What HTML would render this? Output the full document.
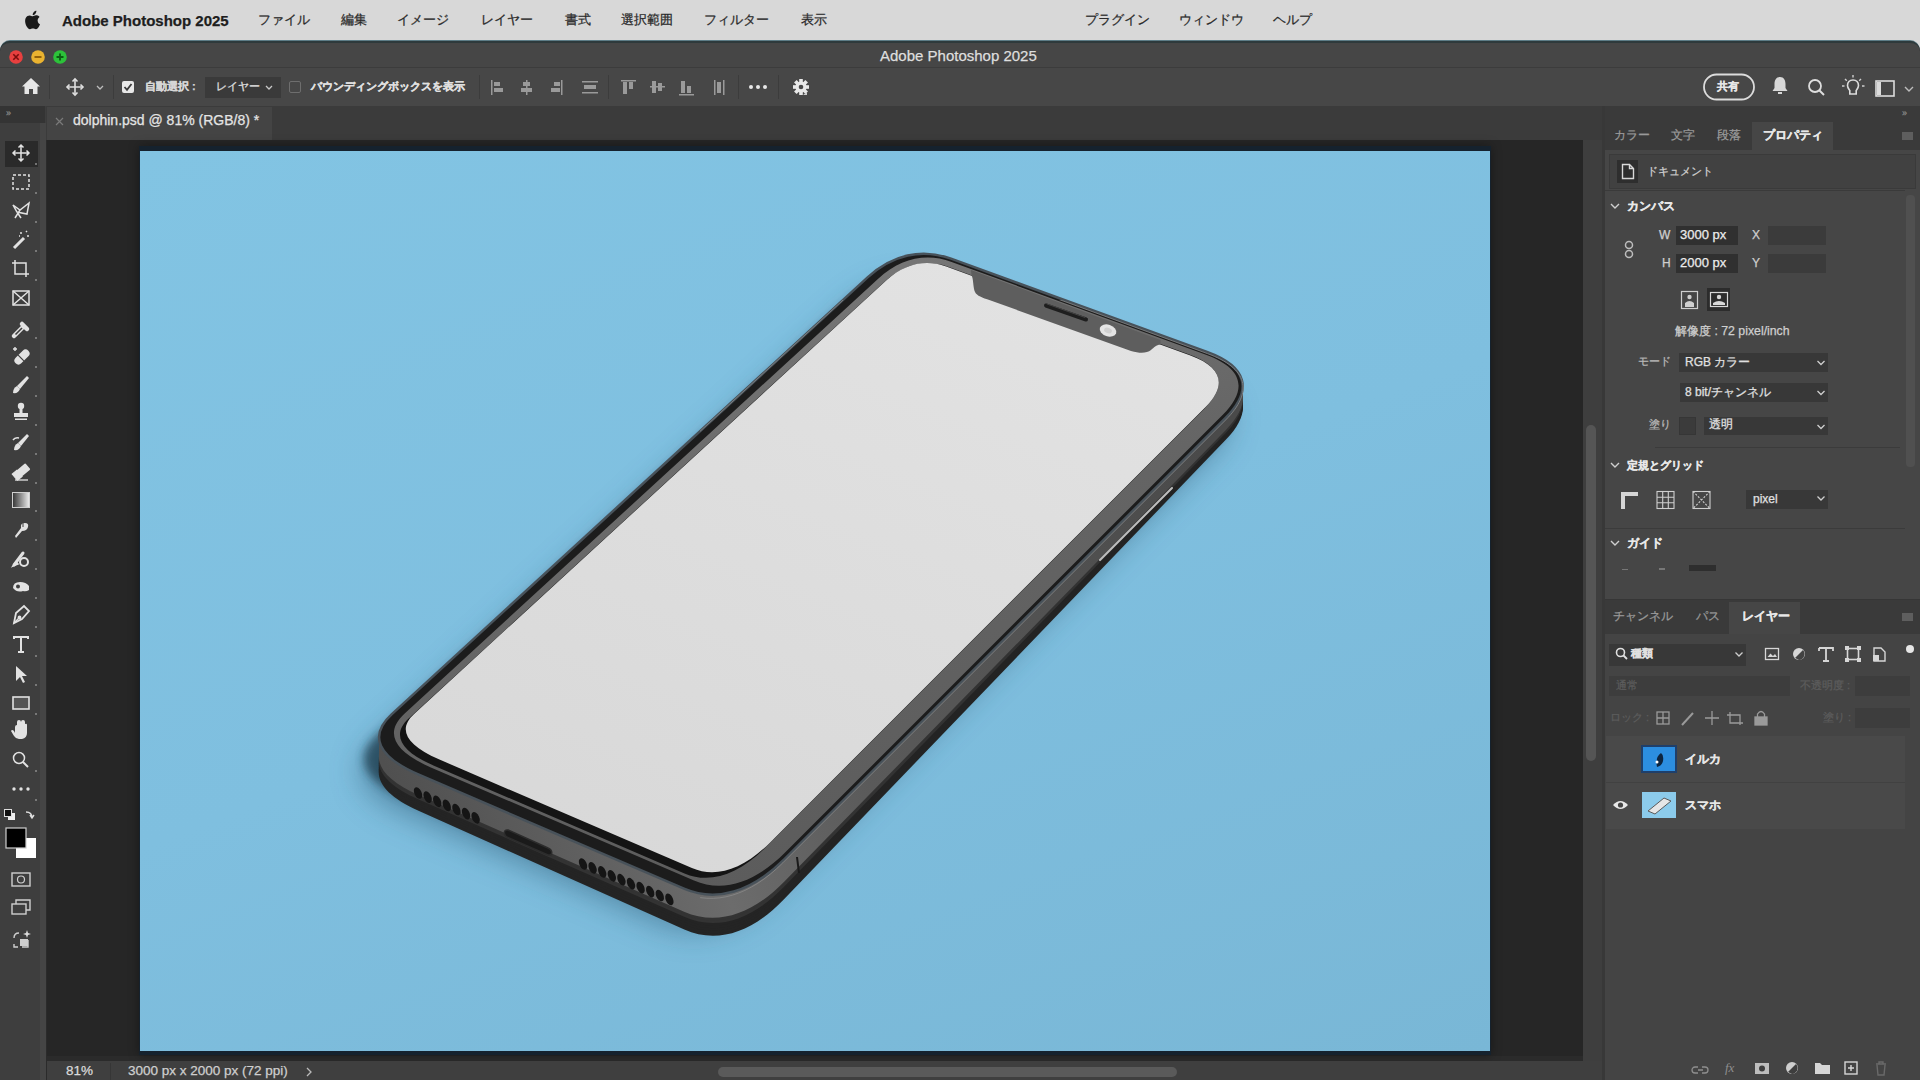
<!DOCTYPE html>
<html lang="ja">
<head>
<meta charset="utf-8">
<style>
*{margin:0;padding:0;box-sizing:border-box}
html,body{width:1920px;height:1080px;overflow:hidden;background:#d9d9d9;font-family:"Liberation Sans",sans-serif}
.a{position:absolute}
.t{position:absolute;white-space:nowrap;line-height:1;-webkit-text-stroke:0.25px currentColor}
#menubar{left:0;top:0;width:1920px;height:41px;background:#d8d8d8}
#menubar .t{top:13px;font-size:13px;color:#2a2a2a}
#win{left:0;top:41px;width:1920px;height:1039px;background:#2b2b2b;border-radius:10px 10px 0 0;box-shadow:0 -1px 0 #5d7c86}
#title{left:0;top:41px;width:1920px;height:27px;background:#464646;border-radius:10px 10px 0 0;border-top:2px solid #2e3a3c;border-bottom:1px solid #3c3c3c}
#opts{left:0;top:68px;width:1920px;height:38px;background:#474747}
#tabs{left:0;top:106px;width:1920px;height:34px;background:#3b3b3b}
#tool{left:0;top:106px;width:46px;height:974px;background:#3e3e3e}
#paste{left:47px;top:140px;width:1536px;height:921px;background:#262626;border-bottom:5px solid #2b2b2b}
#status{left:47px;top:1061px;width:1555px;height:19px;background:#3f3f3f}
#vscroll{left:1583px;top:140px;width:19px;height:921px;background:#3e3e3e}
#rpanel{left:1602px;top:106px;width:318px;height:974px;background:#3a3a3a}
.ic{position:absolute}
</style>
</head>
<body>
<div id="menubar" class="a">
  <svg class="a" style="left:24px;top:10px" width="17" height="20" viewBox="0 0 17 20"><path d="M13.6 10.6c0-2.3 1.9-3.4 2-3.5-1.1-1.6-2.8-1.8-3.4-1.8-1.4-.1-2.8.9-3.5.9-.7 0-1.8-.8-3-.8C4.200 5.400 2.700 6.300 1.900 7.700c-1.600 2.800-.4 6.900 1.100 9.200.8 1.100 1.700 2.300 2.900 2.300 1.200 0 1.600-.7 3-.7s1.800.7 3 .7c1.300 0 2.100-1.100 2.800-2.300.9-1.300 1.300-2.600 1.300-2.600-.1 0-2.400-.9-2.400-3.700zM11.400 3.800c.6-.8 1.100-1.900 1-3-.9 0-2.100.6-2.700 1.400-.6.700-1.100 1.800-1 2.900 1 .1 2.100-.5 2.700-1.300z" fill="#1a1a1a"/></svg>
  <div class="t" style="left:62px;font-weight:bold;font-size:15px;color:#1e1e1e">Adobe Photoshop 2025</div>
  <div class="t" style="left:258px">ファイル</div>
  <div class="t" style="left:341px">編集</div>
  <div class="t" style="left:397px">イメージ</div>
  <div class="t" style="left:481px">レイヤー</div>
  <div class="t" style="left:565px">書式</div>
  <div class="t" style="left:621px">選択範囲</div>
  <div class="t" style="left:704px">フィルター</div>
  <div class="t" style="left:801px">表示</div>
  <div class="t" style="left:1085px">プラグイン</div>
  <div class="t" style="left:1179px">ウィンドウ</div>
  <div class="t" style="left:1273px">ヘルプ</div>
</div>
<div id="win" class="a"></div>
  <div id="title" class="a">
    <svg class="a" style="left:0;top:0" width="80" height="27">
      <circle cx="16" cy="14" r="6.8" fill="#e8403f"/><path d="M13.3 11.3 L18.7 16.7 M18.7 11.3 L13.3 16.7" stroke="#7a0d0d" stroke-width="1.6"/>
      <circle cx="38" cy="14" r="6.8" fill="#eab330"/><path d="M34.5 14 H41.5" stroke="#8a5a05" stroke-width="1.8"/>
      <circle cx="60" cy="14" r="6.8" fill="#2cc23a"/><path d="M56.5 14 H63.5 M60 10.5 V17.5" stroke="#0b5e12" stroke-width="1.8"/>
    </svg>
    <div class="t" style="left:880px;top:5px;font-size:15px;color:#dedede">Adobe Photoshop 2025</div>
  </div>
  <div id="opts" class="a">
    <svg class="a" style="left:0;top:0" width="1920" height="38" viewBox="0 0 1920 38">
      <g fill="#e6e6e6" stroke="none">
        <path d="M31 10 L22 18.5 L24.5 18.5 L24.5 26 L29 26 L29 21 L33 21 L33 26 L37.5 26 L37.5 18.5 L40 18.5 Z"/>
      </g>
      <g stroke="#e0e0e0" stroke-width="1.6" fill="none">
        <path d="M75 11 V27 M67 19 H83"/>
        <path d="M72.5 13.5 L75 11 L77.5 13.5 M72.5 24.5 L75 27 L77.5 24.5 M69.5 16.5 L67 19 L69.5 21.5 M80.5 16.5 L83 19 L80.5 21.5"/>
        <path d="M97 18 L100 21 L103 18" stroke-width="1.3" stroke="#bdbdbd"/>
      </g>
      <rect x="49" y="7" width="1" height="24" fill="#3c3c3c"/>
      <rect x="113" y="7" width="1" height="24" fill="#3c3c3c"/>
      <rect x="122" y="13" width="12" height="12" rx="2" fill="#e8e8e8"/>
      <path d="M124.5 19 L127 21.8 L131.5 16" stroke="#3a3a3a" stroke-width="1.8" fill="none"/>
      <rect x="205" y="9" width="76" height="21" fill="#3a3a3a"/>
      <path d="M266 18 L269 21 L272 18" stroke="#c8c8c8" stroke-width="1.3" fill="none"/>
      <rect x="289.5" y="13.5" width="11" height="11" rx="1.5" fill="none" stroke="#6e6e6e" stroke-width="1"/>
      <rect x="479" y="7" width="1" height="24" fill="#3c3c3c"/>
      <g fill="#9a9a9a">
        <rect x="491" y="12" width="1.5" height="15"/><rect x="494" y="14" width="6" height="4"/><rect x="494" y="20" width="9" height="4"/>
        <rect x="526" y="12" width="1.5" height="15"/><rect x="523" y="14" width="7" height="4"/><rect x="521" y="20" width="11" height="4"/>
        <rect x="561" y="12" width="1.5" height="15"/><rect x="554" y="14" width="6" height="4"/><rect x="551" y="20" width="9" height="4"/>
        <rect x="582" y="13" width="16" height="1.5"/><rect x="584" y="17" width="12" height="4"/><rect x="582" y="24" width="16" height="1.5"/>
      </g>
      <rect x="608" y="7" width="1" height="24" fill="#3c3c3c"/>
      <g fill="#9a9a9a">
        <rect x="621" y="12" width="15" height="1.5"/><rect x="623" y="14" width="4" height="12"/><rect x="629" y="14" width="4" height="7"/>
        <rect x="650" y="18" width="15" height="1.5"/><rect x="652" y="13" width="4" height="12"/><rect x="658" y="15" width="4" height="8"/>
        <rect x="679" y="26" width="15" height="1.5"/><rect x="681" y="13" width="4" height="12"/><rect x="687" y="18" width="4" height="7"/>
        <rect x="714" y="12" width="1.5" height="15"/><rect x="717" y="14" width="4" height="11"/><rect x="723" y="12" width="1.5" height="15"/>
      </g>
      <rect x="738" y="7" width="1" height="24" fill="#3c3c3c"/>
      <g fill="#e8e8e8"><circle cx="751" cy="19" r="2"/><circle cx="758" cy="19" r="2"/><circle cx="765" cy="19" r="2"/></g>
      <rect x="778" y="7" width="1" height="24" fill="#3c3c3c"/>
      <g transform="translate(801 19)" fill="#e8e8e8">
        <circle r="5.5"/>
        <g><rect x="-1.8" y="-8" width="3.6" height="16"/><rect x="-8" y="-1.8" width="16" height="3.6"/><rect x="-1.8" y="-8" width="3.6" height="16" transform="rotate(45)"/><rect x="-1.8" y="-8" width="3.6" height="16" transform="rotate(-45)"/></g>
        <circle r="2.3" fill="#474747"/>
      </g>
      <path d="M803 27 h4 v-3 z" fill="#cfcfcf"/>
      <rect x="1704" y="6.5" width="50" height="25" rx="12.5" fill="none" stroke="#dcdcdc" stroke-width="1.8"/>
      <path d="M1780 9 c-4 0 -5.5 3.5 -5.5 7 v4 l-2 3 h15 l-2 -3 v-4 c0 -3.5 -1.5 -7 -5.5 -7z M1778 24 h4 v2 h-4z" fill="#d8d8d8"/>
      <circle cx="1815" cy="18" r="6" fill="none" stroke="#dedede" stroke-width="1.8"/>
      <path d="M1819.5 22.5 L1824 27" stroke="#dedede" stroke-width="2"/>
      <path d="M1853 12 c-3.5 0 -5.5 2.6 -5.5 5.5 c0 2.2 1.5 3.6 2.3 5 v3.5 h6.4 v-3.5 c0.8 -1.4 2.3 -2.8 2.3 -5 c0 -2.9 -2 -5.5 -5.5 -5.5z" fill="none" stroke="#dcdcdc" stroke-width="1.6"/>
      <path d="M1853 7 v2.5 M1845 11 l1.8 1.8 M1861 11 l-1.8 1.8 M1842 18 h2.5 M1862 18 h2.5" stroke="#cfcfcf" stroke-width="1.4"/>
      <rect x="1876" y="13" width="18" height="15" fill="none" stroke="#dcdcdc" stroke-width="1.6"/>
      <rect x="1877" y="14" width="4" height="13" fill="#dcdcdc"/>
      <path d="M1905 19 L1909 23 L1913 19" stroke="#bdbdbd" stroke-width="1.4" fill="none"/>
    </svg>
    <div class="t" style="left:145px;top:13px;font-size:11px;color:#d6d6d6;font-weight:bold">自動選択 :</div>
    <div class="t" style="left:216px;top:13px;font-size:11px;color:#e0e0e0">レイヤー</div>
    <div class="t" style="left:311px;top:13px;font-size:11px;color:#e0e0e0;font-weight:bold">バウンディングボックスを表示</div>
    <div class="t" style="left:1717px;top:13px;font-size:11px;color:#e6e6e6;font-weight:bold">共有</div>
  </div>
  <div id="tabs" class="a">
    <div class="a" style="left:47px;top:1px;width:225px;height:33px;background:#444444"></div>
    <div class="t" style="left:73px;top:7px;font-size:14px;color:#e4e4e4">dolphin.psd @ 81% (RGB/8) *</div>
    <svg class="a" style="left:55px;top:11px" width="9" height="9"><path d="M1 1 L8 8 M8 1 L1 8" stroke="#7a7a7a" stroke-width="1.2"/></svg>
  </div>
  <div id="tool" class="a">
    <div class="a" style="left:0;top:0;width:45px;height:17px;background:#343434"></div>
    <div class="t" style="left:6px;top:3px;font-size:9px;color:#8a8a8a;letter-spacing:-1px">&#8250;&#8250;</div>
    <div class="a" style="left:40px;top:17px;width:6px;height:957px;background:#454545"></div>
    <div class="a" style="left:5px;top:35px;width:33px;height:26px;background:#2a2a2a"></div>
  </div>
  <svg class="a" style="left:0;top:140px" width="46" height="820" viewBox="0 140 46 820">
    <g fill="none" stroke="#e2e2e2" stroke-width="1.5">
      <!-- move 153 -->
      <path d="M21 145 V161 M13 153 H29 M18.5 147.5 L21 145 L23.5 147.5 M18.5 158.5 L21 161 L23.5 158.5 M15.5 150.5 L13 153 L15.5 155.5 M26.5 150.5 L29 153 L26.5 155.5"/>
      <!-- marquee 182 -->
      <rect x="13" y="175" width="16" height="14" stroke-dasharray="3 2"/>
      <!-- lasso 211 -->
      <path d="M13 205 L20 210 L29 203 L27 214 L17 212 Z M20 210 L15 218 M17 212 L21 218"/>
      <!-- wand 240 -->
      <path d="M14 248 L24 238" stroke-width="3"/>
      <path d="M21 232 v2 M27 236 h2 M26 231 l1 1 M19 236 h1"/>
      <!-- crop 269 -->
      <path d="M15 260 V274 H29 M12 263 H26 V277"/>
      <!-- frame 298 -->
      <rect x="13" y="291" width="16" height="14"/><path d="M13 291 L29 305 M29 291 L13 305"/>
      <!-- eyedropper 327 -->
      <path d="M14 336 L23 327" stroke-width="4.5" stroke-linecap="round"/><path d="M15.5 334.5 L22 328" stroke="#3e3e3e" stroke-width="1.6"/><path d="M22 324 L27 329" stroke-width="4.5" stroke-linecap="round"/>
      <!-- healing 356 -->
      <g transform="rotate(-45 22 357)"><rect x="13" y="353" width="18" height="8" rx="4" fill="#e2e2e2" stroke="none"/><rect x="20" y="353" width="1.2" height="8" fill="#3e3e3e" stroke="none"/></g><path d="M13 349 h4 M15 347 v4" stroke-width="1.4"/>
      <!-- brush 385 -->
      <path d="M27 376 L29 378 L20 389 L17 386 Z" fill="#e2e2e2" stroke="none"/><path d="M17 386 L20 389 Q18 394 13 393 Q13 388 17 386Z" fill="#e2e2e2" stroke="none"/>
      <!-- stamp 414 -->
      <path d="M21 407 V413" stroke-width="3"/><circle cx="21" cy="406" r="3.2" fill="#e2e2e2" stroke="none"/><rect x="14" y="413" width="14" height="4" fill="#e2e2e2" stroke="none"/><rect x="15" y="418.5" width="12" height="1.5" fill="#e2e2e2" stroke="none"/>
      <!-- history brush 443 -->
      <path d="M27 434 L29 436 L21 446 L18 443 Z" fill="#e2e2e2" stroke="none"/><path d="M18 443 L21 446 Q19 451 14 450 Q14 445 18 443Z" fill="#e2e2e2" stroke="none"/><path d="M13 440 q2 -3 6 -2" stroke-width="1.5"/>
      <!-- eraser 472 -->
      <g transform="rotate(-40 21 472)"><rect x="13" y="468" width="17" height="8" rx="1" fill="#e2e2e2" stroke="none"/><rect x="13" y="468" width="6" height="8" fill="none" stroke="#e2e2e2" stroke-width="1.2"/></g><path d="M15 480 H28" stroke-width="1.3"/>
      <!-- gradient 500 -->
      <rect x="12.5" y="492.5" width="17" height="15" fill="url(#grad)" stroke="#cfcfcf" stroke-width="1"/>
      <!-- smudge 529 -->
      <path d="M15 536 L21 528 Q20 523 25 523 Q29 523 28 527 Q27 531 22 531 L16 538 Z" fill="#e2e2e2" stroke="none"/><path d="M20 524 v4 M23 523 v4" stroke="#3e3e3e" stroke-width="1"/>
      <!-- dodge/burn 558 -->
      <path d="M14 565 L23 553" stroke-width="3" stroke-linecap="round"/><path d="M13 566 l3 -4 l2 2z" fill="#e2e2e2"/><circle cx="24" cy="562" r="4" stroke-width="2"/>
      <!-- sponge 587 -->
      <path d="M13 588 q0 -6 7 -6 q6 0 9 4 l0 4 q-3 2 -6 1 q-6 2 -10 -3z" fill="#e2e2e2" stroke="none"/><circle cx="18" cy="586.5" r="2" fill="#3e3e3e" stroke="none"/>
      <!-- pen 616 -->
      <path d="M14 623 L16 613 L24 606 L29 611 L22 619 Z" stroke-width="1.8"/><path d="M14 623 L19 618" stroke-width="1.4"/><circle cx="19.5" cy="617.5" r="1.2" fill="#e2e2e2"/>
      <!-- type 645 -->
      <path d="M14 639 V637 H28 V639 M21 637 V652 M18 652 H24" stroke-width="2"/>
      <!-- path select 674 -->
      <path d="M16 666 V681 L20 677 L23 683 L25 682 L22 676 H27 Z" fill="#e2e2e2" stroke="none"/>
      <!-- rectangle 703 -->
      <rect x="13" y="697" width="16" height="12" fill="#555" stroke-width="1.6"/>
      <!-- hand 731 -->
      <path d="M15 733 V727 q0 -2 2 -2 v-3 q0 -2 2 -2 q2 0 2 2 q0 -2 2 -2 q2 0 2 2 v2 q2 -1 2 1 v8 q0 5 -5 6 h-3 q-3 0 -5 -3 l-3 -5 q1 -2 3 0z" fill="#e2e2e2" stroke="none"/>
      <!-- zoom 760 -->
      <circle cx="19" cy="758" r="5.5"/><path d="M23 762 L28 767" stroke-width="2"/>
    </g>
    <g fill="#e2e2e2"><circle cx="14" cy="789" r="1.7"/><circle cx="21" cy="789" r="1.7"/><circle cx="28" cy="789" r="1.7"/></g>
    <g fill="#8c8c8c"><circle cx="36" cy="164" r="1"/><circle cx="36" cy="193" r="1"/><circle cx="36" cy="222" r="1"/><circle cx="36" cy="251" r="1"/><circle cx="36" cy="280" r="1"/><circle cx="36" cy="338" r="1"/><circle cx="36" cy="367" r="1"/><circle cx="36" cy="396" r="1"/><circle cx="36" cy="425" r="1"/><circle cx="36" cy="454" r="1"/><circle cx="36" cy="483" r="1"/><circle cx="36" cy="511" r="1"/><circle cx="36" cy="540" r="1"/><circle cx="36" cy="569" r="1"/><circle cx="36" cy="598" r="1"/><circle cx="36" cy="627" r="1"/><circle cx="36" cy="656" r="1"/><circle cx="36" cy="685" r="1"/><circle cx="36" cy="714" r="1"/><circle cx="36" cy="771" r="1"/><circle cx="36" cy="800" r="1"/></g>
    <!-- swap / default -->
    <rect x="8" y="813" width="7" height="7" fill="#eee"/>
    <rect x="4.5" y="809.5" width="7" height="7" fill="#111" stroke="#ddd" stroke-width="1"/>
    <path d="M26 812 q6 0 6 6 M30 815 l2 3 l2 -3" stroke="#ddd" stroke-width="1.4" fill="none"/>
    <!-- fg/bg -->
    <rect x="16" y="838" width="20" height="20" fill="#fff"/>
    <rect x="6" y="828" width="20" height="20" fill="#000" stroke="#cfcfcf" stroke-width="1.2"/>
    <!-- quick mask 879 -->
    <rect x="12" y="873" width="18" height="13" fill="none" stroke="#cfcfcf" stroke-width="1.4"/>
    <circle cx="21" cy="879.5" r="3.5" fill="none" stroke="#cfcfcf" stroke-width="1.2"/>
    <!-- screen mode 908 -->
    <rect x="12" y="904" width="14" height="10" fill="none" stroke="#cfcfcf" stroke-width="1.4"/>
    <path d="M16 904 v-4 h14 v10 h-4" fill="none" stroke="#cfcfcf" stroke-width="1.4"/>
    <!-- 942 -->
    <path d="M14 938 q0 -5 5 -5 M14 944 v3 h4 M22 947 h6 v-7" fill="none" stroke="#cfcfcf" stroke-width="1.4"/>
    <rect x="20" y="939" width="8" height="7" fill="#cfcfcf"/>
    <path d="M26 933 l1 -3 l1 3 l3 1 l-3 1 l-1 3 l-1 -3 l-3 -1z" fill="#dcdcdc"/>
    <defs><linearGradient id="grad" x1="0" x2="1"><stop offset="0" stop-color="#333"/><stop offset="1" stop-color="#eee"/></linearGradient></defs>
  </svg>
  <div id="paste" class="a">
    <div class="a" style="left:92px;top:6px;width:1352px;height:909px;background:#15222e;box-shadow:0 0 10px rgba(0,0,0,0.35)"></div>
    <div class="a" style="left:93px;top:11px;width:1350px;height:900px;background:linear-gradient(160deg,#82c4e3 0%,#7fbfdf 50%,#79b7d6 100%)"></div>
  </div>
  <div id="vscroll" class="a">
    <div class="a" style="left:3px;top:285px;width:10px;height:336px;border-radius:5px;background:#555"></div>
  </div>
  <div id="status" class="a">
    <div class="t" style="left:19px;top:3px;font-size:13.5px;color:#dadada">81%</div>
    <div class="a" style="left:63px;top:2px;width:1px;height:18px;background:#363636"></div>
    <div class="t" style="left:81px;top:3px;font-size:13.5px;color:#cfcfcf">3000 px x 2000 px (72 ppi)</div>
    <svg class="a" style="left:258px;top:6px" width="8" height="10"><path d="M2 1 L6 5 L2 9" stroke="#bbb" stroke-width="1.3" fill="none"/></svg>
    <div class="a" style="left:671px;top:6px;width:459px;height:10px;border-radius:5px;background:#5a5a5a"></div>
  </div>
  <div id="rpanel" class="a">
    <div class="a" style="left:0;top:0;width:318px;height:16px;background:#3a3a3a"></div>
    <div class="t" style="left:300px;top:3px;font-size:9px;color:#8a8a8a;letter-spacing:-1px">&#8250;&#8250;</div>
    <div class="a" style="left:0;top:0;width:3px;height:974px;background:#383838"></div>
  </div>
  <div class="a" style="left:1605px;top:122px;width:315px;height:28px;background:#3a3a3a"></div>
  <div class="a" style="left:1752px;top:122px;width:81px;height:28px;background:#464646"></div>
  <div class="t" style="left:1614px;top:129px;font-size:12px;color:#9a9a9a">カラー</div>
  <div class="t" style="left:1671px;top:129px;font-size:12px;color:#9a9a9a">文字</div>
  <div class="t" style="left:1717px;top:129px;font-size:12px;color:#9a9a9a">段落</div>
  <div class="t" style="left:1763px;top:129px;font-size:12px;color:#e8e8e8;font-weight:bold">プロパティ</div>
  <div class="a" style="left:1902px;top:132px;width:11px;height:8px;background:#5e5e5e"></div>
  <!-- properties content -->
  <div class="a" style="left:1605px;top:150px;width:315px;height:449px;background:#464646"></div>
  <div class="a" style="left:1609px;top:154px;width:307px;height:35px;border:1px solid #3a3a3a;background:#414141"></div>
  <div class="a" style="left:1617px;top:160px;width:21px;height:23px;background:#2e2e2e"></div>
  <svg class="a" style="left:1621px;top:163px" width="14" height="17"><path d="M1.5 1.5 H8.5 L12.5 5.5 V15.5 H1.5 Z M8.5 1.5 V5.5 H12.5" fill="none" stroke="#d8d8d8" stroke-width="1.4"/></svg>
  <div class="t" style="left:1647px;top:166px;font-size:11px;color:#cfcfcf">ドキュメント</div>
  <div class="a" style="left:1605px;top:190px;width:300px;height:1px;background:#3a3a3a"></div>
  <svg class="a" style="left:1610px;top:202px" width="10" height="8"><path d="M1 2 L5 6 L9 2" stroke="#cfcfcf" stroke-width="1.4" fill="none"/></svg>
  <div class="t" style="left:1627px;top:201px;font-size:11.5px;color:#e8e8e8;font-weight:bold">カンバス</div>
  <div class="t" style="left:1659px;top:229px;font-size:12px;color:#cfcfcf">W</div>
  <div class="a" style="left:1676px;top:226px;width:62px;height:19px;background:#303030"></div>
  <div class="t" style="left:1680px;top:228px;font-size:13px;color:#ececec">3000 px</div>
  <div class="t" style="left:1752px;top:229px;font-size:12px;color:#cfcfcf">X</div>
  <div class="a" style="left:1768px;top:226px;width:58px;height:19px;background:#3b3b3b"></div>
  <div class="t" style="left:1662px;top:257px;font-size:12px;color:#cfcfcf">H</div>
  <div class="a" style="left:1676px;top:254px;width:62px;height:19px;background:#303030"></div>
  <div class="t" style="left:1680px;top:256px;font-size:13px;color:#ececec">2000 px</div>
  <div class="t" style="left:1752px;top:257px;font-size:12px;color:#cfcfcf">Y</div>
  <div class="a" style="left:1768px;top:254px;width:58px;height:19px;background:#3b3b3b"></div>
  <svg class="a" style="left:1623px;top:240px" width="12" height="20"><circle cx="6" cy="5" r="3.5" fill="none" stroke="#bdbdbd" stroke-width="1.5"/><circle cx="6" cy="14" r="3.5" fill="none" stroke="#bdbdbd" stroke-width="1.5"/></svg>
  <svg class="a" style="left:1679px;top:288px" width="52" height="24">
    <rect x="2.5" y="3.5" width="16" height="17" fill="none" stroke="#cfcfcf" stroke-width="1.2"/>
    <circle cx="10.5" cy="9" r="2.2" fill="#cfcfcf"/><path d="M6 19 v-4 q4.5 -4 9 0 v4z" fill="#cfcfcf"/>
    <rect x="28" y="0" width="23" height="23" fill="#2c2c2c"/>
    <rect x="31.5" y="4.5" width="17" height="14" fill="none" stroke="#d8d8d8" stroke-width="1.2"/>
    <circle cx="40" cy="9" r="2.2" fill="#d8d8d8"/><path d="M34 17 v-2 q6 -4 12 0 v2z" fill="#d8d8d8"/>
  </svg>
  <div class="t" style="left:1675px;top:325px;font-size:12.3px;color:#cfcfcf">解像度 : 72 pixel/inch</div>
  <div class="t" style="left:1638px;top:356px;font-size:11px;color:#b8b8b8">モード</div>
  <div class="a" style="left:1679px;top:353px;width:149px;height:19px;background:#383838"></div>
  <div class="t" style="left:1685px;top:356px;font-size:12px;color:#e0e0e0">RGB カラー</div>
  <div class="a" style="left:1680px;top:383px;width:148px;height:19px;background:#383838"></div>
  <div class="t" style="left:1685px;top:386px;font-size:12px;color:#e0e0e0">8 bit/チャンネル</div>
  <div class="t" style="left:1649px;top:419px;font-size:11px;color:#b8b8b8">塗り</div>
  <div class="a" style="left:1679px;top:417px;width:17px;height:18px;background:#3b3b3b;border:1px solid #363636"></div>
  <div class="a" style="left:1704px;top:417px;width:124px;height:18px;background:#383838"></div>
  <div class="t" style="left:1709px;top:419px;font-size:11.5px;color:#e0e0e0">透明</div>
  <svg class="a" style="left:1816px;top:358px" width="10" height="80"><path d="M1.5 3 L5 6.5 L8.5 3 M1.5 33 L5 36.5 L8.5 33 M1.5 67 L5 70.5 L8.5 67" stroke="#cfcfcf" stroke-width="1.3" fill="none"/></svg>
  <div class="a" style="left:1655px;top:447px;width:245px;height:1px;background:#3b3b3b"></div>
  <svg class="a" style="left:1610px;top:461px" width="10" height="8"><path d="M1 2 L5 6 L9 2" stroke="#cfcfcf" stroke-width="1.4" fill="none"/></svg>
  <div class="t" style="left:1627px;top:460px;font-size:11px;color:#e8e8e8;font-weight:bold">定規とグリッド</div>
  <svg class="a" style="left:1619px;top:489px" width="100" height="22">
    <path d="M2 20 V3 H19 V7 H6 V20 Z" fill="#d6d6d6"/>
    <g fill="none" stroke="#cfcfcf" stroke-width="1.1"><rect x="38" y="2.5" width="17" height="17"/><path d="M38 8.2 H55 M38 13.8 H55 M43.7 2.5 V19.5 M49.3 2.5 V19.5"/>
    <rect x="74" y="2.5" width="17" height="17"/><path d="M74 2.5 L91 19.5 M91 2.5 L74 19.5" stroke-dasharray="2 1.5"/></g>
  </svg>
  <div class="a" style="left:1746px;top:490px;width:82px;height:19px;background:#383838"></div>
  <div class="t" style="left:1753px;top:493px;font-size:12px;color:#e0e0e0">pixel</div>
  <svg class="a" style="left:1816px;top:495px" width="10" height="8"><path d="M1.5 1.5 L5 5 L8.5 1.5" stroke="#cfcfcf" stroke-width="1.3" fill="none"/></svg>
  <div class="a" style="left:1605px;top:528px;width:300px;height:1px;background:#3b3b3b"></div>
  <svg class="a" style="left:1610px;top:539px" width="10" height="8"><path d="M1 2 L5 6 L9 2" stroke="#cfcfcf" stroke-width="1.4" fill="none"/></svg>
  <div class="t" style="left:1627px;top:538px;font-size:11.5px;color:#e8e8e8;font-weight:bold">ガイド</div>
  <div class="a" style="left:1622px;top:569px;width:6px;height:1px;background:#777"></div>
  <div class="a" style="left:1659px;top:568px;width:6px;height:2px;background:#777"></div>
  <div class="a" style="left:1689px;top:565px;width:27px;height:6px;background:#2e2e2e"></div>
  <div class="a" style="left:1906px;top:195px;width:9px;height:272px;border-radius:4px;background:#505050"></div>
  <div class="a" style="left:1605px;top:599px;width:315px;height:1px;background:#363636"></div>
  <!-- layers panel -->
  <div class="a" style="left:1605px;top:600px;width:315px;height:34px;background:#3a3a3a"></div>
  <div class="a" style="left:1729px;top:602px;width:71px;height:32px;background:#464646"></div>
  <div class="t" style="left:1613px;top:610px;font-size:12px;color:#9a9a9a">チャンネル</div>
  <div class="t" style="left:1696px;top:610px;font-size:12px;color:#9a9a9a">パス</div>
  <div class="t" style="left:1742px;top:610px;font-size:12px;color:#e8e8e8;font-weight:bold">レイヤー</div>
  <div class="a" style="left:1902px;top:613px;width:11px;height:8px;background:#5e5e5e"></div>
  <div class="a" style="left:1605px;top:634px;width:315px;height:422px;background:#444444"></div>
  <div class="a" style="left:1609px;top:644px;width:137px;height:22px;background:#383838"></div>
  <svg class="a" style="left:1615px;top:647px" width="14" height="14"><circle cx="5.5" cy="5.5" r="4" fill="none" stroke="#e0e0e0" stroke-width="1.6"/><path d="M8.5 8.5 L12 12" stroke="#e0e0e0" stroke-width="1.8"/></svg>
  <div class="t" style="left:1631px;top:648px;font-size:11px;color:#e0e0e0;font-weight:bold">種類</div>
  <svg class="a" style="left:1734px;top:651px" width="10" height="8"><path d="M1.5 1.5 L5 5 L8.5 1.5" stroke="#cfcfcf" stroke-width="1.3" fill="none"/></svg>
  <svg class="a" style="left:1762px;top:644px" width="158" height="22">
    <rect x="3.5" y="4.5" width="13" height="11" fill="none" stroke="#d6d6d6" stroke-width="1.3"/><path d="M5.5 13 L8.5 9.5 L11 12 L13 10 L15 13z" fill="#d6d6d6"/>
    <circle cx="37" cy="10" r="6" fill="#d6d6d6"/><path d="M33 14 L41 6 A6 6 0 0 1 37 16z" fill="#434343"/>
    <path d="M57 4 H71 V7 M64 4 V17 M61 17 H67 M57 4 V7" stroke="#d6d6d6" stroke-width="1.8" fill="none"/>
    <rect x="85.5" y="4.5" width="11" height="11" fill="none" stroke="#d6d6d6" stroke-width="1.6"/><rect x="83" y="2" width="4" height="4" fill="#d6d6d6"/><rect x="95" y="2" width="4" height="4" fill="#d6d6d6"/><rect x="83" y="14" width="4" height="4" fill="#d6d6d6"/><rect x="95" y="14" width="4" height="4" fill="#d6d6d6"/>
    <path d="M112 4 H119 L123 8 V17 H112 Z" fill="none" stroke="#d6d6d6" stroke-width="1.4"/><rect x="111" y="11" width="6" height="6" fill="#d6d6d6"/>
    <circle cx="148" cy="5" r="4" fill="#e6e6e6"/>
  </svg>
  <div class="a" style="left:1609px;top:676px;width:181px;height:20px;background:#3d3d3d"></div>
  <div class="t" style="left:1616px;top:680px;font-size:11px;color:#5c5c5c">通常</div>
  <div class="t" style="left:1800px;top:680px;font-size:11px;color:#5c5c5c">不透明度 :</div>
  <div class="a" style="left:1855px;top:676px;width:55px;height:20px;background:#3d3d3d"></div>
  <div class="t" style="left:1610px;top:712px;font-size:11px;color:#5c5c5c">ロック :</div>
  <svg class="a" style="left:1652px;top:708px" width="120" height="20">
    <g fill="none" stroke="#9a9a9a" stroke-width="1.3">
      <rect x="5" y="4" width="12" height="12"/><path d="M5 10 H17 M11 4 V16"/>
      <path d="M30 17 L41 5" stroke-width="2"/>
      <path d="M60 3 V17 M53 10 H67"/>
      <path d="M78 4 V15 H91 M75 7 H88 V17"/>
      <rect x="103" y="9" width="12" height="8" fill="#9a9a9a"/><path d="M105.5 9 V6 q3.5 -5 7 0 V9"/>
    </g>
  </svg>
  <div class="t" style="left:1823px;top:712px;font-size:11px;color:#5c5c5c">塗り :</div>
  <div class="a" style="left:1855px;top:708px;width:55px;height:20px;background:#3d3d3d"></div>
  <div class="a" style="left:1606px;top:736px;width:299px;height:93px;background:#494949"></div>
  <div class="a" style="left:1606px;top:782px;width:299px;height:1px;background:#414141"></div>
  <div class="a" style="left:1641px;top:745px;width:36px;height:28px;background:#1f3f6a"></div>
  <div class="a" style="left:1643px;top:747px;width:32px;height:24px;background:#2c8ee0"></div>
  <svg class="a" style="left:1643px;top:747px" width="32" height="24"><path d="M14 20 q-2 -10 4 -14 q3 2 2 8 q-1 5 -6 6z" fill="#0d2540"/><circle cx="14" cy="15" r="1.5" fill="#fff"/></svg>
  <div class="t" style="left:1685px;top:753px;font-size:12px;color:#e6e6e6;font-weight:bold">イルカ</div>
  <svg class="a" style="left:1612px;top:799px" width="17" height="12"><path d="M1 6 q7.5 -8 15 0 q-7.5 8 -15 0z" fill="#e8e8e8"/><circle cx="8.5" cy="6" r="2.6" fill="#454545"/></svg>
  <div class="a" style="left:1642px;top:792px;width:34px;height:26px;background:#8ccbeb"></div>
  <svg class="a" style="left:1642px;top:792px" width="34" height="26"><path d="M6 19 L22 6 L29 9 L13 22z" fill="#e6e6e6" stroke="#5a5a5a" stroke-width="1"/></svg>
  <div class="t" style="left:1685px;top:799px;font-size:12px;color:#e6e6e6;font-weight:bold">スマホ</div>
  <div class="a" style="left:1605px;top:1056px;width:315px;height:24px;background:#444"></div>
  <svg class="a" style="left:1690px;top:1058px" width="230" height="20">
    <g fill="none" stroke="#8e8e8e" stroke-width="1.3">
      <path d="M8 9 h-3 a3 3 0 0 0 0 6 h3 M12 9 h3 a3 3 0 0 1 0 6 h-3 M8 12 h5"/>
    </g>
    <text x="35" y="14" font-family="Liberation Serif" font-style="italic" font-size="13" fill="#8e8e8e">fx</text>
    <rect x="65" y="5" width="14" height="11" fill="#bdbdbd"/><circle cx="72" cy="10.5" r="3" fill="#3e3e3e"/>
    <circle cx="102" cy="10" r="6" fill="#cfcfcf"/><path d="M98 14 L106 6 A6 6 0 0 1 102 16z" fill="#3e3e3e"/>
    <path d="M125 5 h5 l2 2 h8 v9 h-15z" fill="#d6d6d6"/>
    <rect x="155" y="4" width="12" height="12" fill="none" stroke="#d6d6d6" stroke-width="1.4"/><path d="M161 7 v6 M158 10 h6" stroke="#d6d6d6" stroke-width="1.4"/>
    <path d="M186 6 h10 M189 6 v-2 h4 v2 M187 7 l1 10 h6 l1 -10" fill="none" stroke="#6a6a6a" stroke-width="1.4"/>
  </svg>

<svg class="a" style="left:0;top:0" width="1920" height="1080" viewBox="0 0 1920 1080">
<defs><filter id="blur" x="-20%" y="-20%" width="140%" height="140%"><feGaussianBlur stdDeviation="16"/></filter>
<filter id="blur2" x="-20%" y="-20%" width="140%" height="140%"><feGaussianBlur stdDeviation="5"/></filter>
<linearGradient id="scr" x1="0.7" y1="0" x2="0.2" y2="1"><stop offset="0" stop-color="#e2e2e2"/><stop offset="1" stop-color="#d8d8d8"/></linearGradient>
<linearGradient id="ring" x1="0.3" y1="0" x2="0.7" y2="1"><stop offset="0" stop-color="#7a7a7a"/><stop offset="0.5" stop-color="#646464"/><stop offset="1" stop-color="#5a5a5a"/></linearGradient>
<linearGradient id="side" gradientUnits="userSpaceOnUse" x1="400" y1="800" x2="1200" y2="450"><stop offset="0" stop-color="#505050"/><stop offset="0.3" stop-color="#6c6c6c"/><stop offset="0.5" stop-color="#5a5a5a"/><stop offset="1" stop-color="#4a4a4a"/></linearGradient>
<clipPath id="rclip"><rect x="700" y="300" width="600" height="700"/></clipPath></defs>
<path d="M848.0 311.9 C875.8 286.4 908.5 279.1 941.5 291.1 L1189.0 381.3 C1232.9 397.4 1239.8 422.8 1208.5 454.1 L771.8 890.8 C736.0 926.6 697.4 937.6 661.6 922.2 L404.7 811.8 C359.9 792.5 349.9 769.1 376.3 744.9 Z" fill="#2a5570" opacity="0.55" filter="url(#blur)"/>
<path d="M851.7 299.6 C877.5 275.9 907.9 269.1 938.4 280.2 L1194.8 373.6 C1236.3 388.8 1242.8 412.8 1213.4 442.2 L774.0 881.6 C740.0 915.6 703.7 926.2 670.2 911.8 L404.9 797.7 C362.5 779.5 352.8 757.6 377.2 735.2 Z" fill="#1d3a4c" opacity="0.75" filter="url(#blur2)"/>
<path d="M868.3 293.2 C892.7 269.8 921.6 263.2 950.8 274.3 L1207.3 371.5 C1247.4 386.7 1253.9 410.5 1226.0 439.6 L783.5 899.8 C751.0 933.5 716.3 943.9 684.3 929.6 L418.5 810.8 C377.6 792.5 367.9 770.8 391.0 748.8 Z" fill="#242424"/>
<path d="M868.2 292.2 C892.7 268.9 921.6 262.3 950.8 273.3 L1207.2 370.3 C1247.4 385.5 1253.9 409.2 1225.9 438.3 L783.5 897.2 C751.1 930.9 716.3 941.4 684.3 927.1 L418.6 808.5 C377.6 790.3 368.0 768.6 391.0 746.6 Z" fill="#242424"/>
<path d="M868.2 291.2 C892.7 267.9 921.6 261.3 950.8 272.3 L1207.2 369.1 C1247.4 384.2 1253.9 408.0 1225.9 436.9 L783.6 894.7 C751.1 928.3 716.3 938.8 684.2 924.5 L418.6 806.3 C377.6 788.1 368.0 766.4 391.1 744.5 Z" fill="#242424"/>
<path d="M868.1 290.2 C892.7 267.0 921.6 260.4 950.8 271.4 L1207.2 367.8 C1247.4 383.0 1253.9 406.7 1225.8 435.6 L783.7 892.1 C751.1 925.8 716.3 936.2 684.2 921.9 L418.6 804.0 C377.6 785.8 368.0 764.2 391.1 742.3 Z" fill="#242424"/>
<path d="M868.1 289.2 C892.7 266.0 921.6 259.4 950.8 270.4 L1207.2 366.6 C1247.4 381.7 1253.9 405.4 1225.8 434.3 L783.7 889.6 C751.1 923.2 716.3 933.6 684.2 919.4 L418.6 801.8 C377.6 783.6 368.0 762.1 391.1 740.2 Z" fill="#242424"/>
<path d="M868.0 288.3 C892.6 265.1 921.6 258.5 950.8 269.4 L1207.2 365.4 C1247.3 380.5 1253.8 404.1 1225.7 433.0 L783.8 887.1 C751.1 920.6 716.3 931.0 684.2 916.8 L418.7 799.5 C377.6 781.4 368.0 759.9 391.2 738.0 Z" fill="#333333"/>
<path d="M868.0 287.3 C892.6 264.1 921.6 257.5 950.8 268.4 L1207.2 364.2 C1247.3 379.2 1253.8 402.8 1225.7 431.7 L783.8 884.5 C751.2 918.0 716.3 928.4 684.2 914.3 L418.7 797.3 C377.6 779.2 368.0 757.7 391.2 735.9 Z" fill="#333333"/>
<path d="M868.0 286.3 C892.6 263.2 921.6 256.6 950.9 267.5 L1207.1 363.0 C1247.3 378.0 1253.8 401.5 1225.6 430.3 L783.9 882.0 C751.2 915.4 716.3 925.8 684.1 911.7 L418.7 795.0 C377.6 777.0 368.0 755.5 391.3 733.7 Z" fill="url(#side)"/>
<path d="M867.9 285.3 C892.6 262.2 921.6 255.6 950.9 266.5 L1207.1 361.8 C1247.3 376.7 1253.8 400.3 1225.6 429.0 L784.0 879.4 C751.2 912.9 716.3 923.3 684.1 909.2 L418.7 792.8 C377.7 774.8 368.1 753.3 391.3 731.6 Z" fill="url(#side)"/>
<path d="M867.9 284.3 C892.6 261.3 921.6 254.7 950.9 265.5 L1207.1 360.5 C1247.3 375.5 1253.8 399.0 1225.5 427.7 L784.0 876.9 C751.2 910.3 716.3 920.7 684.1 906.6 L418.8 790.5 C377.7 772.5 368.1 751.2 391.3 729.4 Z" fill="url(#side)"/>
<path d="M867.8 283.3 C892.6 260.3 921.6 253.7 950.9 264.5 L1207.1 359.3 C1247.3 374.2 1253.7 397.7 1225.5 426.4 L784.1 874.4 C751.3 907.7 716.2 918.1 684.1 904.0 L418.8 788.3 C377.7 770.3 368.1 749.0 391.4 727.3 Z" fill="url(#side)"/>
<path d="M867.8 282.4 C892.5 259.3 921.6 252.8 950.9 263.6 L1207.1 358.1 C1247.3 373.0 1253.7 396.4 1225.4 425.1 L784.2 871.8 C751.3 905.1 716.2 915.5 684.1 901.5 L418.8 786.0 C377.7 768.1 368.1 746.8 391.4 725.1 Z" fill="url(#side)"/>
<path d="M867.7 281.4 C892.5 258.4 921.6 251.8 950.9 262.6 L1207.0 356.9 C1247.3 371.7 1253.7 395.1 1225.4 423.7 L784.2 869.3 C751.3 902.5 716.2 912.9 684.0 898.9 L418.8 783.8 C377.7 765.9 368.1 744.6 391.5 723.0 Z" fill="url(#side)"/>
<path d="M867.7 280.4 C892.5 257.4 921.6 250.9 950.9 261.6 L1207.0 355.7 C1247.3 370.5 1253.7 393.8 1225.3 422.4 L784.3 866.7 C751.3 900.0 716.2 910.3 684.0 896.4 L418.9 781.5 C377.7 763.7 368.1 742.4 391.5 720.8 Z" fill="url(#side)"/>
<path d="M867.7 279.4 C892.5 256.5 921.7 249.9 950.9 260.7 L1207.0 354.5 C1247.3 369.2 1253.7 392.5 1225.2 421.1 L784.4 864.2 C751.3 897.4 716.2 907.7 684.0 893.8 L418.9 779.2 C377.7 761.5 368.1 740.2 391.6 718.6 Z" fill="url(#side)"/>
<path d="M867.6 278.4 C892.5 255.5 921.7 249.0 951.0 259.7 L1207.0 353.2 C1247.3 368.0 1253.7 391.3 1225.2 419.8 L784.4 861.7 C751.4 894.8 716.2 905.2 684.0 891.3 L418.9 777.0 C377.7 759.2 368.2 738.1 391.6 716.5 Z" fill="url(#side)"/>
<path d="M867.6 277.4 C892.5 254.6 921.7 248.0 951.0 258.7 L1207.0 352.0 C1247.3 366.7 1253.6 390.0 1225.1 418.5 L784.5 859.1 C751.4 892.2 716.2 902.6 684.0 888.7 L418.9 774.7 C377.7 757.0 368.2 735.9 391.6 714.3 Z" fill="url(#side)"/>
<path d="M867.6 277.4 C892.5 254.6 921.7 248.0 951.0 258.7 L1207.0 352.0 C1247.3 366.7 1253.6 390.0 1225.1 418.5 L784.5 859.1 C751.4 892.2 716.2 902.6 684.0 888.7 L418.9 774.7 C377.7 757.0 368.2 735.9 391.6 714.3 Z" fill="#1c1c1c" stroke="#48525a" stroke-width="2.5"/>
<path d="M866.6 278.4 C891.5 255.6 920.7 249.0 950.0 259.7 L1207.4 353.6 C1247.7 368.2 1254.1 391.5 1225.6 420.0 L782.8 862.8 C749.7 895.9 714.5 906.3 682.3 892.4 L415.7 777.8 C374.5 760.1 364.9 738.9 388.4 717.4 Z" fill="none" stroke="#8a8a8a" stroke-width="1" clip-path="url(#rclip)" opacity="0.8"/>
<path d="M878.2 278.7 C900.3 258.4 925.9 252.6 951.6 261.9 L1206.0 354.7 C1242.7 368.0 1248.5 389.1 1222.8 414.8 L784.8 852.8 C754.4 883.2 722.7 892.9 694.0 880.5 L430.9 767.4 C393.2 751.2 384.1 732.3 404.7 713.4 Z" fill="url(#ring)"/>
<path d="M884.8 281.4 C903.9 263.8 926.1 258.6 948.1 266.7 L1189.3 354.6 C1222.3 366.6 1227.7 385.4 1204.7 408.4 L765.5 847.6 C737.9 875.2 709.6 884.2 684.5 873.4 L434.0 765.7 C400.0 751.1 391.2 734.5 408.9 718.2 Z" fill="#141414"/>
<path d="M886.2 280.5 C904.4 263.8 925.4 258.9 946.2 266.5 L1190.4 355.5 C1222.2 367.1 1227.4 385.2 1205.4 407.2 L769.7 842.9 C743.0 869.6 715.8 878.4 691.9 868.1 L438.9 759.3 C406.0 745.2 397.3 729.3 414.1 713.9 Z" fill="url(#scr)"/>
<path d="M971.5 275.5 C973.5 278 973 288 975 292 C977 296 982 297.5 990 300.3 L1131 351 C1141 354 1147 353 1151 350 C1154 347.5 1156 345 1160.5 344.5 L1160.5 340 L971 270 Z" fill="#5e5e5e"/>
<path d="M1046 305.5 L1086 319.5" stroke="#1e1e1e" stroke-width="4" stroke-linecap="round"/>
<path d="M1047 304 L1085 317.5" stroke="#444" stroke-width="1" stroke-linecap="round"/>
<ellipse cx="1108" cy="330.5" rx="8.5" ry="5.8" transform="rotate(18 1108 330.5)" fill="#e4e4e4"/>
<ellipse cx="1108" cy="330.5" rx="4" ry="2.6" transform="rotate(18 1108 330.5)" fill="#d0d0d0"/>
<ellipse cx="418.0" cy="793.0" rx="3.6" ry="6.2" transform="rotate(-25 418.0 793.0)" fill="#151515"/>
<ellipse cx="427.6" cy="797.1" rx="3.6" ry="6.2" transform="rotate(-25 427.6 797.1)" fill="#151515"/>
<ellipse cx="437.2" cy="801.3" rx="3.6" ry="6.2" transform="rotate(-25 437.2 801.3)" fill="#151515"/>
<ellipse cx="446.8" cy="805.4" rx="3.6" ry="6.2" transform="rotate(-25 446.8 805.4)" fill="#151515"/>
<ellipse cx="456.4" cy="809.5" rx="3.6" ry="6.2" transform="rotate(-25 456.4 809.5)" fill="#151515"/>
<ellipse cx="466.0" cy="813.6" rx="3.6" ry="6.2" transform="rotate(-25 466.0 813.6)" fill="#151515"/>
<ellipse cx="475.6" cy="817.8" rx="3.6" ry="6.2" transform="rotate(-25 475.6 817.8)" fill="#151515"/>
<ellipse cx="583.0" cy="864.0" rx="3.6" ry="6.2" transform="rotate(-25 583.0 864.0)" fill="#151515"/>
<ellipse cx="592.6" cy="867.9" rx="3.6" ry="6.2" transform="rotate(-25 592.6 867.9)" fill="#151515"/>
<ellipse cx="602.2" cy="871.9" rx="3.6" ry="6.2" transform="rotate(-25 602.2 871.9)" fill="#151515"/>
<ellipse cx="611.8" cy="875.8" rx="3.6" ry="6.2" transform="rotate(-25 611.8 875.8)" fill="#151515"/>
<ellipse cx="621.4" cy="879.7" rx="3.6" ry="6.2" transform="rotate(-25 621.4 879.7)" fill="#151515"/>
<ellipse cx="631.0" cy="883.7" rx="3.6" ry="6.2" transform="rotate(-25 631.0 883.7)" fill="#151515"/>
<ellipse cx="640.6" cy="887.6" rx="3.6" ry="6.2" transform="rotate(-25 640.6 887.6)" fill="#151515"/>
<ellipse cx="650.2" cy="891.6" rx="3.6" ry="6.2" transform="rotate(-25 650.2 891.6)" fill="#151515"/>
<ellipse cx="659.8" cy="895.5" rx="3.6" ry="6.2" transform="rotate(-25 659.8 895.5)" fill="#151515"/>
<ellipse cx="669.4" cy="899.4" rx="3.6" ry="6.2" transform="rotate(-25 669.4 899.4)" fill="#151515"/>
<path d="M508 830 L548 848 C553 850 553 856 548 855 L509 838 C503 836 503 829 508 830 Z" fill="#1a1a1a" stroke="#2c2c2c" stroke-width="1.5"/>
<path d="M1100 560 L1172 488" stroke="#bdbdbd" stroke-width="2" stroke-linecap="round"/>
<path d="M797 857 L799 873" stroke="#1a1a1a" stroke-width="2"/>
</svg>
</body>
</html>
